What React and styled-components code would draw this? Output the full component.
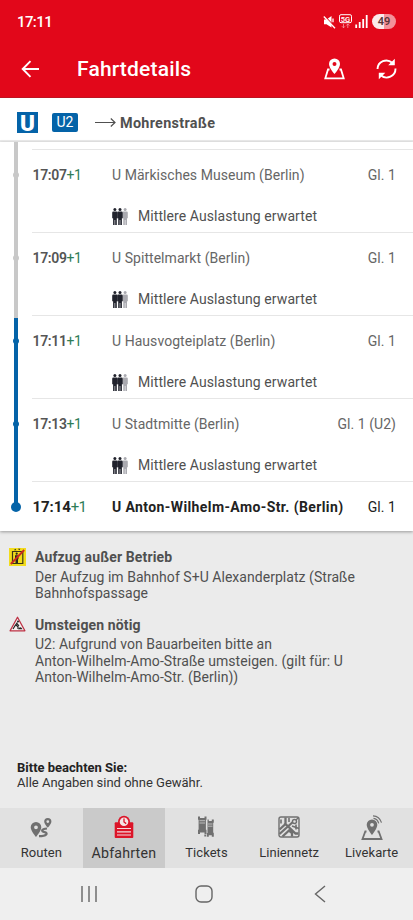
import styled, { createGlobalStyle } from "styled-components";

const GlobalStyle = createGlobalStyle`
  * {
    box-sizing: border-box;
  }

  body {
    margin: 0;
    background: #ebebeb;
    font-family: Roboto, "Liberation Sans", sans-serif;
    color: #505050;
  }
`;

const Screen = styled.div`
  display: flex;
  flex-direction: column;
  width: 413px;
  height: 920px;
  overflow: hidden;
  background: #ebebeb;
`;

const Header = styled.header`
  height: 98px;
  flex: none;
  background: #e2071a;
  color: #fff;
  border-bottom: 1px solid #bd1422;
`;

const StatusBar = styled.div`
  display: flex;
  align-items: center;
  justify-content: space-between;
  height: 43px;
  padding: 0 17px 0 17px;
`;

const Clock = styled.span`
  font-size: 15px;
  font-weight: 500;
  letter-spacing: -0.6px;
`;

const StatusIcons = styled.div`
  display: flex;
  align-items: center;
  gap: 3px;
`;

const Battery = styled.span`
  width: 24px;
  height: 15px;
  margin-left: 1px;
  border-radius: 8px;
  background: linear-gradient(90deg, #fbe9ea 49%, #f3929a 49%);
  color: #5a3438;
  font-size: 11px;
  font-weight: 600;
  line-height: 15px;
  text-align: center;
`;

const TitleBar = styled.div`
  display: flex;
  align-items: center;
  height: 52px;
  padding: 0 16px 0 21px;
`;

const Title = styled.h1`
  flex: 1;
  margin: 0 0 0 37px;
  font-size: 21px;
  font-weight: 500;
  letter-spacing: 0.18px;
`;

const HeaderActions = styled.div`
  display: flex;
  align-items: center;
  gap: 31px;
`;

const LineBar = styled.div`
  display: flex;
  align-items: center;
  flex: none;
  height: 44px;
  padding: 7px 17px 0;
  background: #fff;
  border-bottom: 2px solid #ebebeb;
`;

const UBahnLogo = styled.span`
  width: 21px;
  height: 21px;
  background: #0463a8;
  color: #fff;
  font-size: 22.5px;
  font-weight: 900;
  line-height: 22px;
  text-align: center;
`;

const LineBadge = styled.span`
  width: 26px;
  height: 19px;
  margin: 0 17px 0 14px;
  border-radius: 2px;
  background: #0463a8;
  color: #fff;
  font-size: 14px;
  line-height: 19px;
  text-align: center;
`;

const Destination = styled.span`
  margin: 2px 0 0 4px;
  font-size: 14.4px;
  font-weight: 700;
  letter-spacing: 0.3px;
`;

const StopList = styled.div`
  flex: none;
  height: 389px;
  background: #fff;
  box-shadow: 0 1px 3px rgba(0, 0, 0, 0.35);
`;

const Spacer = styled.div`
  width: 4px;
  height: 7px;
  margin-left: 14px;
  background: #c8c8c8;
`;

const Stop = styled.div`
  display: grid;
  grid-template-columns: 32px 1fr;
  height: ${({ $last }) => ($last ? "50px" : "83px")};
`;

const Rail = styled.div`
  display: flex;
  justify-content: center;
  align-items: flex-start;
  height: ${({ $last }) => ($last ? "30px" : "100%")};
  background: ${({ $from, $to }) =>
      `linear-gradient(${$from} 3px, ${$to} 3px)`}
    center top / 4px ${({ $last }) => ($last ? "26px" : "100%")} no-repeat;
`;

const Dot = styled.span`
  width: ${({ $size }) => $size}px;
  height: ${({ $size }) => $size}px;
  margin-top: ${({ $size }) => 26 - $size / 2}px;
  border-radius: 50%;
  background: ${({ $color }) => $color};
`;

const StopBody = styled.div`
  border-top: 1px solid #e6e6e6;
  padding-right: 17px;
`;

const StopLine = styled.div`
  display: flex;
  align-items: baseline;
  height: 50px;
  padding-top: 17px;
  font-size: 14px;
  line-height: 16px;
  color: ${({ $last }) => ($last ? "#222" : "#666")};
`;

const Time = styled.span`
  width: 79.5px;
  margin-left: 0.5px;
  flex: none;
  font-weight: ${({ $last }) => ($last ? 700 : 600)};
  font-size: ${({ $last }) => ($last ? 15 : 14)}px;
  letter-spacing: ${({ $last }) => ($last ? -0.1 : -0.35)}px;
  color: ${({ $last }) => ($last ? "#222" : "#555")};
`;

const Delay = styled.span`
  font-weight: 400;
  letter-spacing: -0.6px;
  color: #2f7d57;
`;

const StopName = styled.span`
  flex: 1;
  white-space: nowrap;
  font-size: 14px;
  font-weight: ${({ $last }) => ($last ? 700 : 400)};
  letter-spacing: ${({ $last }) => ($last ? 0.4 : 0.05)}px;
`;

const Platform = styled.span`
  letter-spacing: 0.05px;
`;

const Occupancy = styled.div`
  display: flex;
  align-items: center;
  gap: 9px;
  height: 20px;
  margin: 6px 0 0 80px;
  font-size: 14px;
  letter-spacing: 0.08px;
  line-height: 20px;

  svg {
    flex: none;
  }
`;

const Notices = styled.main`
  flex: 1;
  padding: 17px 17px 0 9px;
`;

const Notice = styled.section`
  display: grid;
  grid-template-columns: 17px 1fr;
  column-gap: 9px;
  margin-bottom: 14.2px;
`;

const NoticeTitle = styled.h2`
  margin: 0;
  font-size: 14px;
  font-weight: 700;
  line-height: 18px;
  letter-spacing: 0.14px;
`;

const NoticeText = styled.p`
  margin: 2.6px 0 0;
  font-size: 14px;
  line-height: 16.5px;
  letter-spacing: 0.04px;
  white-space: pre-line;
`;

const Disclaimer = styled.footer`
  flex: none;
  height: 49px;
  padding: 1px 17px 0;
  font-size: 13px;
  line-height: 15px;
  color: #333;

  strong {
    display: block;
    color: #222;
  }
`;

const TabBar = styled.nav`
  display: grid;
  grid-template-columns: repeat(5, 1fr);
  flex: none;
  height: 60px;
  background: #e1e1e1;
`;

const Tab = styled.div`
  display: flex;
  flex-direction: column;
  align-items: center;
  padding-top: 7px;
  background: ${({ $active }) => ($active ? "#cacaca" : "transparent")};
  color: #333;
  font-size: ${({ $active }) => ($active ? 14.2 : 13)}px;
  letter-spacing: ${({ $active }) => ($active ? 0.2 : 0.05)}px;
  line-height: 16px;
`;

const TabIcon = styled.span`
  display: flex;
  align-items: flex-start;
  height: 30px;
  color: ${({ $active }) => ($active ? "#dc1428" : "#707070")};
`;

const SystemBar = styled.div`
  display: grid;
  grid-template-columns: repeat(3, 1fr);
  align-items: center;
  justify-items: center;
  flex: none;
  height: 52px;
  padding: 0 35px 0 31px;
  background: #efefef;
`;

const MuteIcon = () => (
  <svg width="13" height="14" viewBox="0 0 13 14">
    <path d="M1 4.500h2.500L8.500 1v11.500L3.500 9.200H1z" fill="#fff" />
    <path d="M10 3.500v3.800" stroke="#fff" strokeWidth="1.300" />
    <path d="M1.700 1.200l11 11.500" stroke="#e2071a" strokeWidth="1.200" />
    <path d="M.8 1.500l11.200 11.700" stroke="#fff" strokeWidth="1.300" />
  </svg>
);

const NetworkIcon = () => (
  <svg width="13" height="15" viewBox="0 0 13 15">
    <rect x=".5" y=".7" width="12" height="8" rx="1.500" fill="none" stroke="#fff" />
    <text
      x="6.500"
      y="7.500"
      fill="#fff"
      fontSize="7.500"
      fontWeight="600"
      textAnchor="middle"
    >
      5G
    </text>
    <path
      d="M4.500 9.800v4M3 12.300l1.500 1.500L6 12.300M8.800 14v-4M7.300 11.500L8.800 10l1.500 1.500"
      fill="none"
      stroke="#f4a0a6"
      strokeWidth=".8"
    />
  </svg>
);

const SignalIcon = () => (
  <svg width="13" height="13" viewBox="0 0 13 13">
    <path
      d="M1.200 9.500V13M4.700 7v6M8.200 4v9M11.700 0v13"
      stroke="#fff"
      strokeWidth="1.800"
    />
  </svg>
);

const BackIcon = () => (
  <svg width="19" height="18" viewBox="0 0 19 18">
    <path
      d="M18 9H2M9.500 1.200L1.700 9l7.800 7.800"
      fill="none"
      stroke="#fff"
      strokeWidth="1.900"
    />
  </svg>
);

const MapIcon = () => (
  <svg width="21" height="22" viewBox="0 0 21 22">
    <path
      d="M5.500 11.500H4L1.300 20.300h18.400L17 11.500h-1.500"
      fill="none"
      stroke="#fff"
      strokeWidth="1.800"
    />
    <path
      fillRule="evenodd"
      d="M10.500.5a5.500 5.500 0 0 0-5.500 5.500c0 4 5.500 10 5.500 10S16 10 16 6A5.500 5.500 0 0 0 10.500.5zm0 3.500a2 2 0 1 1 0 4 2 2 0 0 1 0-4z"
      fill="#fff"
    />
  </svg>
);

const RefreshIcon = () => (
  <svg width="21" height="22" viewBox="0 0 21 22">
    <path
      d="M1.500 11A8.800 8.800 0 0 1 16.200 4.800M19.500 10.500A8.800 8.800 0 0 1 4.800 17.200"
      fill="none"
      stroke="#fff"
      strokeWidth="1.900"
    />
    <path d="M18.800.8v6.400h-6.600zM2.800 21.300v-6.500h6.500z" fill="#fff" />
  </svg>
);

const LongArrow = () => (
  <svg width="21" height="10" viewBox="0 0 21 10">
    <path
      d="M0 4.500h20M15.800 .5L20 4.500l-4.200 4"
      fill="none"
      stroke="#505050"
      strokeWidth="1.200"
    />
  </svg>
);

const Person = ({ x, fill }) => (
  <g transform={`translate(${x} 0)`} fill={fill}>
    <circle cx="2.500" cy="1.600" r="1.500" />
    <path d="M.8 3.600h3.400q1 0 1 1.200v5.500H4.400V17H2.800v-5h-.6v5H.7v-6.700H-.2V4.800q0-1.200 1-1.200z" />
  </g>
);

const PeopleIcon = () => (
  <svg width="17" height="17" viewBox="0 0 17 17">
    <Person x={10.6} fill="#aaaab0" />
    <Person x={5.5} fill="#20222c" />
    <Person x={0.4} fill="#20222c" />
  </svg>
);

const ElevatorIcon = () => (
  <svg width="17" height="18" viewBox="0 0 17 18">
    <rect width="17" height="18" fill="#f2dc1c" />
    <path d="M3.500 3.500h10.300v12H3.500z" fill="none" stroke="#3b3718" strokeWidth="1.200" />
    <circle cx="7.700" cy="5.700" r="1.100" fill="#29291c" />
    <path d="M6 7.300h3.500v4H9V15H6.500v-3.700H6z" fill="#29291c" />
    <path d="M5 2.300l1.200-1.500 1.200 1.500zM9 .8h2.400l-1.200 1.500z" fill="#29291c" />
    <path d="M1.800 16L15.200 2" stroke="#c92b22" strokeWidth="1.900" />
  </svg>
);

const RoadworksIcon = () => (
  <svg width="17" height="16" viewBox="0 0 17 16">
    <path
      d="M8.500 1.300l7.400 13.500H1.100z"
      fill="#f7f1f1"
      stroke="#bd3245"
      strokeWidth="1.300"
      strokeLinejoin="round"
    />
    <circle cx="9" cy="5.500" r="1" fill="#222" />
    <path
      d="M8.300 6.500L6 9.800 4 13M7 9l2 1.800V13M7.800 7.500l2.200 2.300"
      fill="none"
      stroke="#222"
      strokeWidth="1.200"
    />
    <path d="M9 13.300q2.200-4.300 4.600 0z" fill="#222" />
  </svg>
);

const RoutesIcon = () => (
  <svg width="22" height="24" viewBox="0 0 22 24" fill="currentColor">
    <path
      fillRule="evenodd"
      d="M6 7a5.300 5.300 0 0 0-5.300 5.300C.7 16 6 22 6 22s5.300-6 5.300-9.700A5.300 5.300 0 0 0 6 7zm0 3.400a1.900 1.900 0 1 1 0 3.800 1.900 1.900 0 0 1 0-3.800z"
    />
    <path
      fillRule="evenodd"
      d="M17.800 3a3.600 3.600 0 0 0-3.600 3.600c0 2.500 3.600 6.200 3.600 6.200s3.600-3.700 3.600-6.200A3.600 3.600 0 0 0 17.800 3zm0 2.200a1.400 1.400 0 1 1 0 2.800 1.400 1.400 0 0 1 0-2.800z"
    />
    <path
      d="M17 13.500c-6 .5-6 3-2.500 3.600 4 .8 2.500 4-5.500 4"
      fill="none"
      stroke="currentColor"
      strokeWidth="2.200"
    />
  </svg>
);

const DeparturesIcon = () => (
  <svg width="20" height="24" viewBox="0 0 20 24">
    <rect x=".7" y="7.300" width="18.600" height="15.700" rx="1" fill="currentColor" />
    <circle cx="10" cy="6.700" r="6" fill="currentColor" />
    <circle cx="10" cy="6.700" r="4.300" fill="#f4e4e5" />
    <path d="M10 3.500v3.500l2.200 1.600" fill="none" stroke="currentColor" strokeWidth="1.300" />
    <path d="M3 13.500h14M3 16.800h14M3 20h14" stroke="#f4dadd" strokeWidth="1.200" />
  </svg>
);

const TicketsIcon = () => (
  <svg width="18" height="24" viewBox="0 0 18 24" fill="currentColor">
    <path d="M1 1.500h2V3h4.500V1.500h2v3.300h-.6v10h.6V19h-2v-1.500H3V19H1v-4.200h.6v-10H1z" />
    <path d="M10.500 4.500h1.300V6h3V4.500h2v3.300h-.6v10h.6v4h-2v-1.500h-3v1.500h-2V18h.7z" />
    <path d="M7.300 19.500h1.800v2H7.300z" />
    <path d="M2.500 5.700h5.500M2.500 8h5.500M11 9h4.500M11 11.200h4.500" stroke="#d0d0d0" strokeWidth=".8" />
  </svg>
);

const NetworkMapIcon = () => (
  <svg width="22" height="24" viewBox="0 0 22 24" fill="none" stroke="currentColor">
    <rect x="1" y="2" width="20" height="20" rx="2" strokeWidth="1.400" />
    <path
      d="M1.500 14.500l6-5.500V2.500M1.500 19l14.500-13M4.500 21.500L11 15.500l3 2.500v3.500M6.500 8l11 10.500h3"
      strokeWidth="2.300"
    />
    <path d="M3 4.500v4M11 3v4M18 9.500v5" strokeWidth="1.600" />
    <circle cx="16.500" cy="6.500" r="2" fill="#e1e1e1" strokeWidth="1.400" />
    <path d="M18 5l2.500-2.500M14 11l7 2.500" strokeWidth="1.400" />
  </svg>
);

const LiveMapIcon = () => (
  <svg width="22" height="26" viewBox="0 0 22 26">
    <path
      d="M5.500 16.500H4.300L1.500 24h19l-2.800-7.500h-1.200"
      fill="none"
      stroke="currentColor"
      strokeWidth="1.800"
    />
    <path
      fillRule="evenodd"
      d="M11 4.500a5.300 5.300 0 0 0-5.300 5.300c0 4 5.300 10.200 5.300 10.200s5.300-6.200 5.300-10.200A5.300 5.300 0 0 0 11 4.500zm0 3.400a1.900 1.900 0 1 1 0 3.800 1.900 1.900 0 0 1 0-3.800z"
      fill="currentColor"
    />
    <path
      d="M12.500 3.300q4 .3 5.200 5M12 .8q6.500.2 8.500 6.800"
      fill="none"
      stroke="currentColor"
      strokeWidth="1.200"
    />
  </svg>
);

const GREY = "#c8c8c8";
const BLUE = "#0463a8";

const stops = [
  { time: "17:07", name: "U Märkisches Museum (Berlin)", platform: "Gl. 1", from: GREY, to: GREY },
  { time: "17:09", name: "U Spittelmarkt (Berlin)", platform: "Gl. 1", from: GREY, to: GREY },
  { time: "17:11", name: "U Hausvogteiplatz (Berlin)", platform: "Gl. 1", from: GREY, to: BLUE },
  { time: "17:13", name: "U Stadtmitte (Berlin)", platform: "Gl. 1 (U2)", from: BLUE, to: BLUE },
  {
    time: "17:14",
    name: "U Anton-Wilhelm-Amo-Str. (Berlin)",
    platform: "Gl. 1",
    from: BLUE,
    to: BLUE,
    last: true,
  },
];

const notices = [
  {
    icon: <ElevatorIcon />,
    title: "Aufzug außer Betrieb",
    text: "Der Aufzug im Bahnhof S+U Alexanderplatz (Straße\nBahnhofspassage",
  },
  {
    icon: <RoadworksIcon />,
    title: "Umsteigen nötig",
    text: "U2: Aufgrund von Bauarbeiten bitte an\nAnton-Wilhelm-Amo-Straße umsteigen. (gilt für: U\nAnton-Wilhelm-Amo-Str. (Berlin))",
  },
];

const tabs = [
  { label: "Routen", icon: <RoutesIcon /> },
  { label: "Abfahrten", icon: <DeparturesIcon />, active: true },
  { label: "Tickets", icon: <TicketsIcon /> },
  { label: "Liniennetz", icon: <NetworkMapIcon /> },
  { label: "Livekarte", icon: <LiveMapIcon /> },
];

export default function App() {
  return (
    <Screen>
      <GlobalStyle />
      <Header>
        <StatusBar>
          <Clock>17:11</Clock>
          <StatusIcons>
            <MuteIcon />
            <NetworkIcon />
            <SignalIcon />
            <Battery>49</Battery>
          </StatusIcons>
        </StatusBar>
        <TitleBar>
          <BackIcon />
          <Title>Fahrtdetails</Title>
          <HeaderActions>
            <MapIcon />
            <RefreshIcon />
          </HeaderActions>
        </TitleBar>
      </Header>

      <LineBar>
        <UBahnLogo>U</UBahnLogo>
        <LineBadge>U2</LineBadge>
        <LongArrow />
        <Destination>Mohrenstraße</Destination>
      </LineBar>

      <StopList>
        <Spacer />
        {stops.map((stop) => (
          <Stop key={stop.time} $last={stop.last}>
            <Rail $from={stop.from} $to={stop.to} $last={stop.last}>
              <Dot $size={stop.last ? 10 : 6} $color={stop.to} />
            </Rail>
            <StopBody>
              <StopLine $last={stop.last}>
                <Time $last={stop.last}>
                  {stop.time}
                  <Delay>+1</Delay>
                </Time>
                <StopName $last={stop.last}>{stop.name}</StopName>
                <Platform>{stop.platform}</Platform>
              </StopLine>
              {!stop.last && (
                <Occupancy>
                  <PeopleIcon />
                  Mittlere Auslastung erwartet
                </Occupancy>
              )}
            </StopBody>
          </Stop>
        ))}
      </StopList>

      <Notices>
        {notices.map((notice) => (
          <Notice key={notice.title}>
            {notice.icon}
            <div>
              <NoticeTitle>{notice.title}</NoticeTitle>
              <NoticeText>{notice.text}</NoticeText>
            </div>
          </Notice>
        ))}
      </Notices>

      <Disclaimer>
        <strong>Bitte beachten Sie:</strong>
        Alle Angaben sind ohne Gewähr.
      </Disclaimer>

      <TabBar>
        {tabs.map((tab) => (
          <Tab key={tab.label} $active={tab.active}>
            <TabIcon $active={tab.active}>{tab.icon}</TabIcon>
            {tab.label}
          </Tab>
        ))}
      </TabBar>

      <SystemBar>
        <svg width="18" height="18" viewBox="0 0 18 18">
          <path d="M2 1v16M9 1v16M16 1v16" stroke="#666" strokeWidth="1.400" />
        </svg>
        <svg width="18" height="18" viewBox="0 0 18 18">
          <rect x="1" y="1" width="16" height="16" rx="5" fill="none" stroke="#666" strokeWidth="1.400" />
        </svg>
        <svg width="12" height="18" viewBox="0 0 12 18">
          <path d="M11 1L1.500 9l9.500 8" fill="none" stroke="#666" strokeWidth="1.400" />
        </svg>
      </SystemBar>
    </Screen>
  );
}
